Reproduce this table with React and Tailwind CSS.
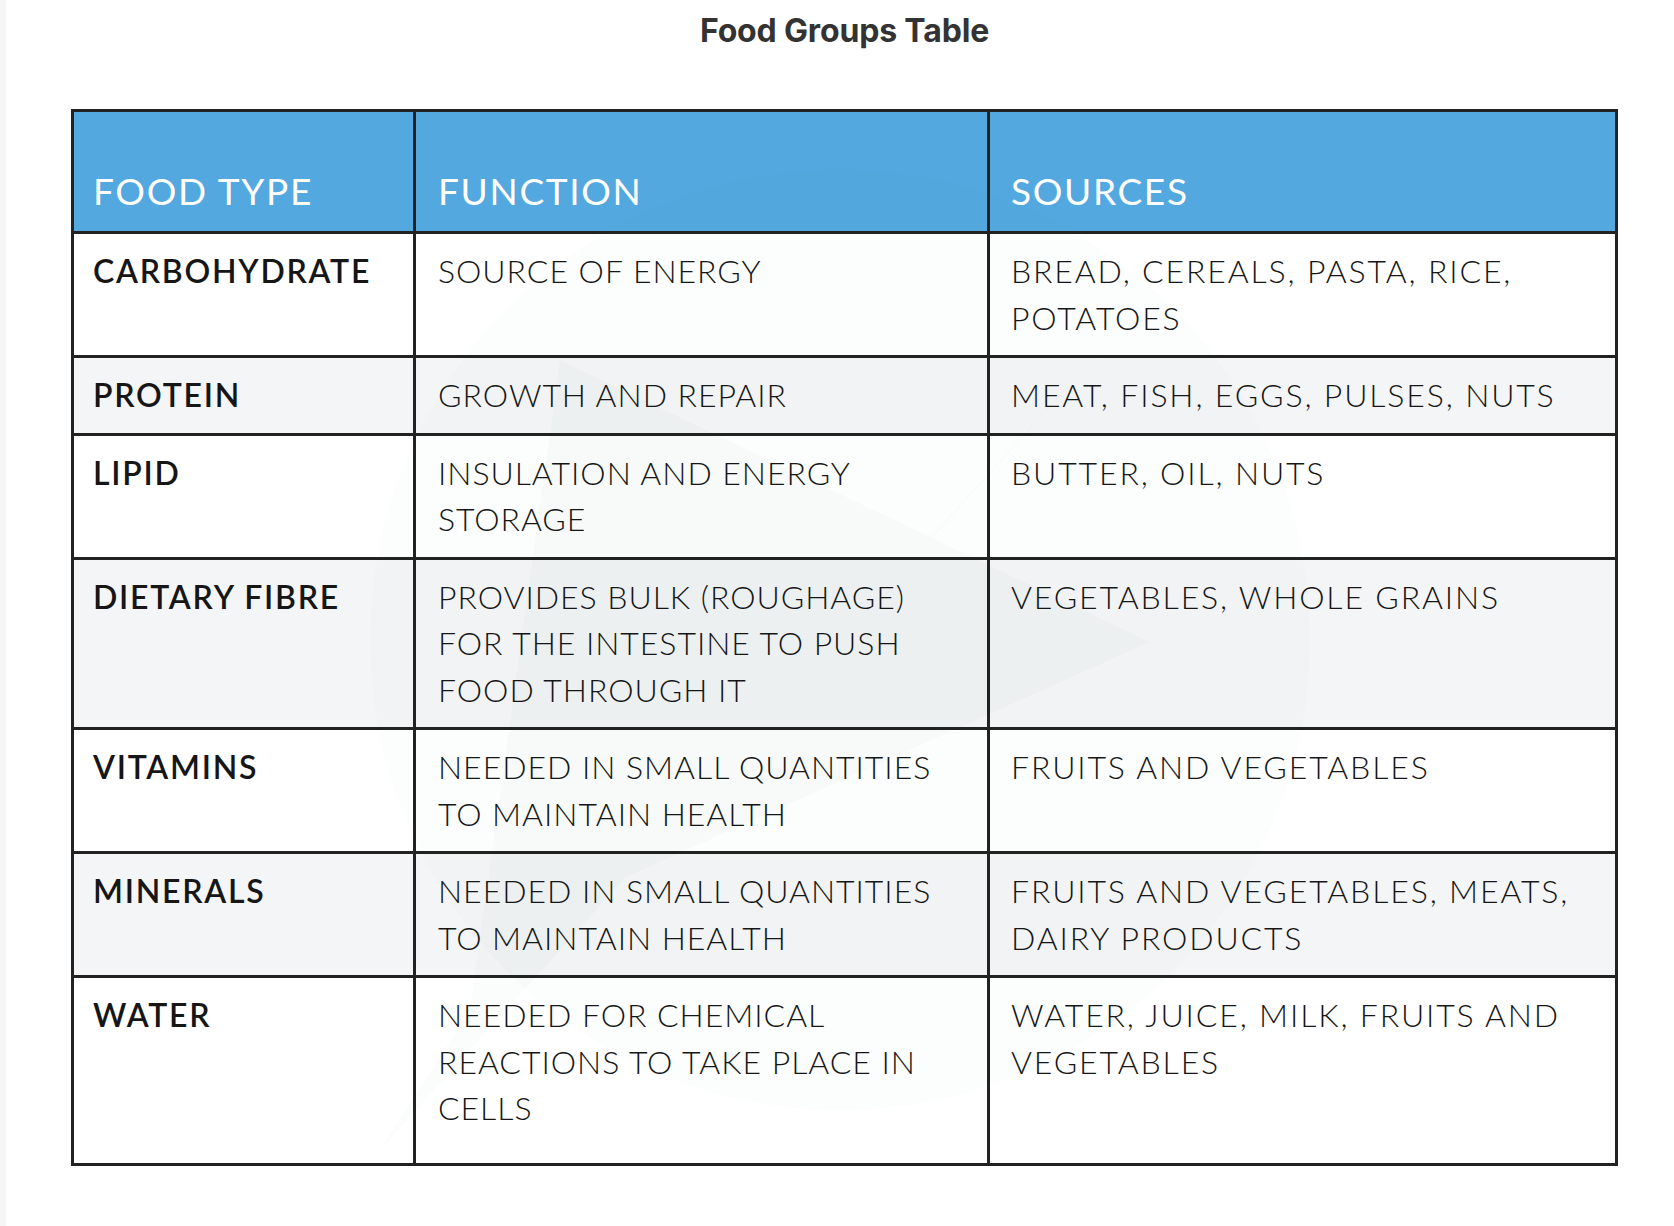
import React from 'react';

const rows = [
  { type: 'CARBOHYDRATE', fn: 'SOURCE OF ENERGY', src: 'BREAD, CEREALS, PASTA, RICE, POTATOES' },
  { type: 'PROTEIN', fn: 'GROWTH AND REPAIR', src: 'MEAT, FISH, EGGS, PULSES, NUTS' },
  { type: 'LIPID', fn: 'INSULATION AND ENERGY STORAGE', src: 'BUTTER, OIL, NUTS' },
  { type: 'DIETARY FIBRE', fn: 'PROVIDES BULK (ROUGHAGE) FOR THE INTESTINE TO PUSH FOOD THROUGH IT', src: 'VEGETABLES, WHOLE GRAINS' },
  { type: 'VITAMINS', fn: 'NEEDED IN SMALL QUANTITIES TO MAINTAIN HEALTH', src: 'FRUITS AND VEGETABLES' },
  { type: 'MINERALS', fn: 'NEEDED IN SMALL QUANTITIES TO MAINTAIN HEALTH', src: 'FRUITS AND VEGETABLES, MEATS, DAIRY PRODUCTS' },
  { type: 'WATER', fn: 'NEEDED FOR CHEMICAL REACTIONS TO TAKE PLACE IN CELLS', src: 'WATER, JUICE, MILK, FRUITS AND VEGETABLES' },
];

function Watermark() {
  return (
    <svg className="absolute left-0 top-0 pointer-events-none" width="1674" height="1226" viewBox="0 0 1674 1226">
      <circle cx="840" cy="640" r="470" fill="#1e3a5f" opacity="0.012" />
      <path d="M1300 130 L380 1150 L470 1010 L560 360 L1150 642 L620 880 Z" fill="#1e3a5f" opacity="0.016" />
    </svg>
  );
}

export default function App() {
  return (
    <div className="relative flex w-full h-[1226px] bg-white overflow-hidden" style={{ fontFamily: 'Lato, "Noto Sans", sans-serif' }}>
      <div className="w-[6px] shrink-0 bg-[#f6f6f7]" />
      <div className="pl-[65px]">
        <h1
          className="w-[1547px] pt-[12px] text-center text-[32px] leading-[38px] font-bold tracking-[-0.005em] text-[#333]"
          style={{ fontFamily: 'Inter, "Noto Sans", sans-serif' }}
        >
          Food Groups Table
        </h1>
        <div className="mt-[59px] w-[1547px] border-[3px] border-[#222]">
          <div className="grid grid-cols-[339px_574px_628px] h-[119px] bg-[#53a8df] text-white text-[37px] leading-[46px] tracking-[0.045em]">
            <div className="flex items-end pl-[19px] pb-[17px]">FOOD TYPE</div>
            <div className="flex items-end pl-[22px] pb-[17px] border-l-[3px] border-[#222]">FUNCTION</div>
            <div className="flex items-end pl-[21px] pb-[17px] border-l-[3px] border-[#222]">SOURCES</div>
          </div>
          {rows.map((r, i) => (
            <div
              key={r.type}
              className={`grid grid-cols-[339px_574px_628px] border-t-[3px] border-[#222] text-[32px] leading-[46.5px] text-[#161616] ${
                i % 2 === 1 ? 'bg-[#f4f5f6]' : 'bg-white'
              } ${i === rows.length - 1 ? 'min-h-[188px]' : ''}`}
            >
              <div className="pl-[19px] pr-3 py-[14px] font-semibold tracking-[0.055em]">{r.type}</div>
              <div className="pl-[22px] pr-3 py-[14px] font-light tracking-[0.03em] border-l-[3px] border-[#222]">{r.fn}</div>
              <div className="pl-[21px] pr-3 py-[14px] font-light tracking-[0.058em] border-l-[3px] border-[#222]">{r.src}</div>
            </div>
          ))}
        </div>
      </div>
      <Watermark />
    </div>
  );
}
